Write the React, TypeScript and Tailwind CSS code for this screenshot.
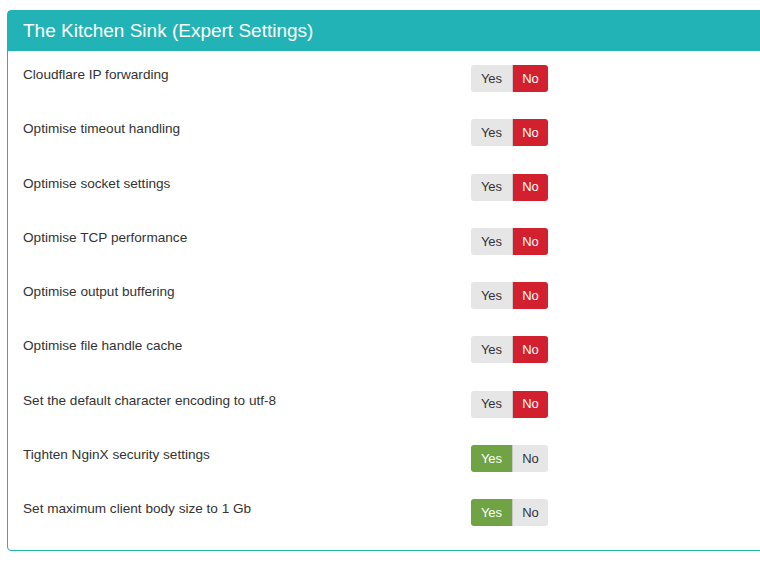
import React from "react";

type Setting = { label: string; on: boolean };

const settings: Setting[] = [
    { label: "Cloudflare IP forwarding", on: false },
    { label: "Optimise timeout handling", on: false },
    { label: "Optimise socket settings", on: false },
    { label: "Optimise TCP performance", on: false },
    { label: "Optimise output buffering", on: false },
    { label: "Optimise file handle cache", on: false },
    { label: "Set the default character encoding to utf-8", on: false },
    { label: "Tighten NginX security settings", on: true },
    { label: "Set maximum client body size to 1 Gb", on: true },
];

// Yes / No segmented switch
function YesNo({ on }: { on: boolean }) {
    return (
        <div className="flex h-[27px] text-[13px] rounded-[3px] overflow-hidden">
            <span
                className={
                    on
                        ? "w-[41px] flex items-center justify-center bg-[#6fa344] text-white"
                        : "w-[41px] flex items-center justify-center bg-[#e6e6e6] text-[#333]"
                }
            >
                Yes
            </span>
            <span className="w-px bg-[#c8c8c8]" />
            <span
                className={
                    on
                        ? "w-[35px] flex items-center justify-center bg-[#e6e6e6] text-[#333]"
                        : "w-[35px] flex items-center justify-center bg-[#d2202f] text-white"
                }
            >
                No
            </span>
        </div>
    );
}

export default function App() {
    return (
        <div className="w-[760px] h-[562px] bg-white pt-[10px] pl-[7px] overflow-hidden font-['Liberation_Sans',Arial,sans-serif]">
            <div className="w-[800px] border border-[#21b3b5] rounded-[4px]">
                <div className="h-[40px] bg-[#21b3b5] flex items-center pl-[15px] text-white text-[19px]">
                    The Kitchen Sink (Expert Settings)
                </div>
                <div className="pt-[14px] pb-[24px] pl-[15px] flex flex-col gap-[27.25px]">
                    {settings.map((s) => (
                        <div key={s.label} className="flex items-start h-[27px]">
                            <div className="w-[448px] text-[13.6px] leading-[20px] text-[#333]">
                                {s.label}
                            </div>
                            <YesNo on={s.on} />
                        </div>
                    ))}
                </div>
            </div>
        </div>
    );
}
